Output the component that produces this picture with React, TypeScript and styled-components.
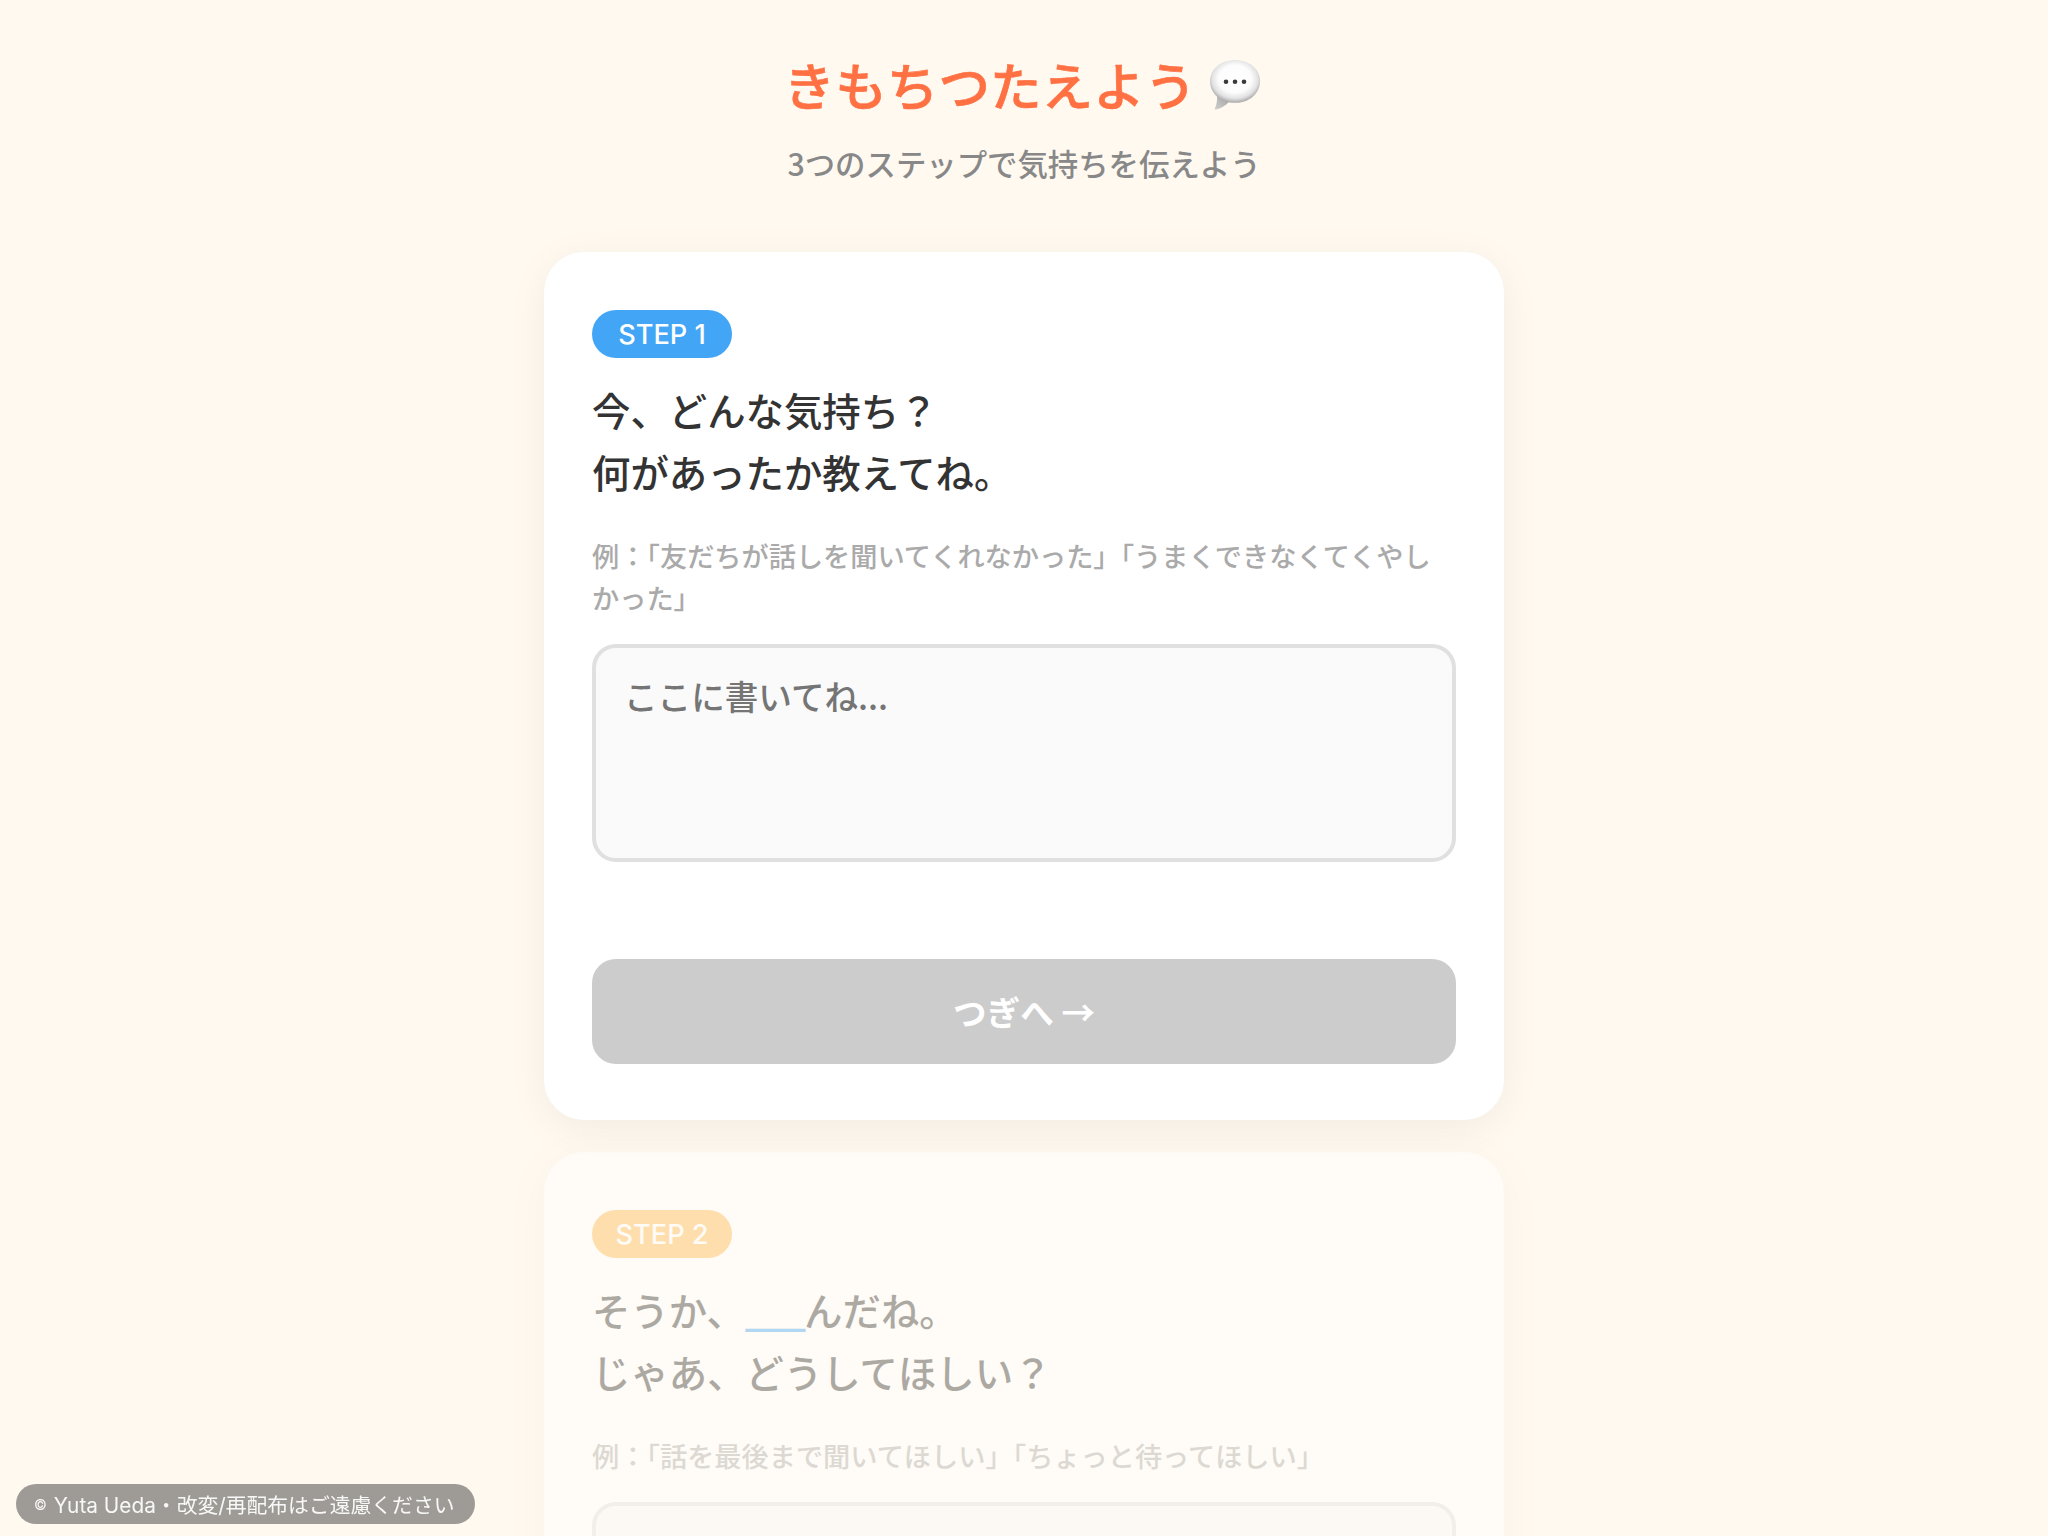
import React from 'react';
import styled, { createGlobalStyle } from 'styled-components';

const GlobalStyle = createGlobalStyle`
  * {
    box-sizing: border-box;
  }
  html,
  body {
    margin: 0;
    height: 100%;
    overflow: hidden;
    background-color: #fff9f0;
    font-family: 'Noto Sans CJK JP', 'Noto Sans', sans-serif;
  }
`;

function BubbleEmoji() {
  return (
    <StEmoji viewBox="0 0 50 50" aria-hidden="true">
      <defs>
        <radialGradient id="bubbleFill" cx="50%" cy="44%" r="56%">
          <stop offset="0%" stopColor="#ffffff" />
          <stop offset="58%" stopColor="#fcfcfc" />
          <stop offset="82%" stopColor="#e2e2e2" />
          <stop offset="100%" stopColor="#a9a9a9" />
        </radialGradient>
        <linearGradient id="tailFill" x1="0" y1="1" x2="1" y2="0">
          <stop offset="0%" stopColor="#d0d0d0" />
          <stop offset="100%" stopColor="#9c9c9c" />
        </linearGradient>
      </defs>
      <path d="M7 34L20 41C15.5 45.5 10.5 48.8 6 49.6C4.8 49.8 4.4 49 5 48C6.8 44.6 7.4 39.5 7 34Z" fill="url(#tailFill)" />
      <path
        d="M25 0C39 0 50 8.8 50 21.2C50 33.8 39 42.8 25 42.8C11 42.8 0 33.8 0 21.2C0 8.8 11 0 25 0Z"
        fill="url(#bubbleFill)"
      />
      <circle cx="16" cy="21.7" r="2.3" fill="#3a3a3a" />
      <circle cx="25" cy="21.7" r="2.3" fill="#3a3a3a" />
      <circle cx="34" cy="21.7" r="2.3" fill="#3a3a3a" />
    </StEmoji>
  );
}

export default function App() {
  return (
    <StPage>
      <GlobalStyle />
      <StHeader>
        <StTitle>
          きもちつたえよう
          <BubbleEmoji />
        </StTitle>
        <StSubtitle>3つのステップで気持ちを伝えよう</StSubtitle>
      </StHeader>

      <StSteps>
        <StCard>
          <StBadge $color="#42a5f5">STEP 1</StBadge>
          <StQuestion>
            今、どんな気持ち？
            <br />
            何があったか教えてね。
          </StQuestion>
          <StHint>例：「友だちが話しを聞いてくれなかった」「うまくできなくてくやしかった」</StHint>
          <StTextarea placeholder="ここに書いてね..." />
          <StNextButton disabled>つぎへ →</StNextButton>
        </StCard>

        <StCard $dimmed>
          <StBadge $color="#ffb74d">STEP 2</StBadge>
          <StQuestion>
            そうか、<StBlank>___</StBlank>んだね。
            <br />
            じゃあ、どうしてほしい？
          </StQuestion>
          <StHint>例：「話を最後まで聞いてほしい」「ちょっと待ってほしい」</StHint>
          <StTextarea placeholder="ここに書いてね..." disabled />
        </StCard>
      </StSteps>

      <StCredit>
        <StCopyMark>©</StCopyMark>Yuta Ueda・改変/再配布はご遠慮ください
      </StCredit>
    </StPage>
  );
}

const StPage = styled.div`
  display: flex;
  flex-direction: column;
  align-items: center;
  height: 100vh;
  padding-top: 46px;
  overflow: hidden;
`;

const StHeader = styled.header`
  display: flex;
  flex-direction: column;
  align-items: center;
  margin-bottom: 66px;
`;

const StTitle = styled.h1`
  display: flex;
  align-items: center;
  gap: 14px;
  margin: 0 4px 18px 0;
  font-size: 51.6px;
  font-weight: 500;
  line-height: 1.49;
  color: #ff7043;
  -webkit-text-stroke: 0.6px #ff7043;
`;

const StEmoji = styled.svg`
  width: 50px;
  height: 50px;
  margin-top: 2px;
  flex-shrink: 0;
`;

const StSubtitle = styled.p`
  margin: 0;
  font-size: 30.4px;
  font-weight: 500;
  line-height: 1.5;
  color: #888888;
`;

const StSteps = styled.main`
  display: flex;
  flex-direction: column;
  gap: 32px;
  width: 960px;
`;

const StCard = styled.section<{ $dimmed?: boolean }>`
  display: flex;
  flex-direction: column;
  align-items: flex-start;
  padding: 58px 48px 56px;
  background-color: #ffffff;
  border-radius: 40px;
  box-shadow: 0 8px 40px rgba(0, 0, 0, 0.06);
  opacity: ${(p) => (p.$dimmed ? 0.4 : 1)};
`;

const StBadge = styled.span<{ $color: string }>`
  display: inline-flex;
  align-items: center;
  justify-content: center;
  width: 140px;
  height: 48px;
  margin-bottom: 21px;
  border-radius: 24px;
  background-color: ${(p) => p.$color};
  font-family: Inter, 'Noto Sans CJK JP', sans-serif;
  font-size: 27.2px;
  font-weight: 500;
  color: #ffffff;
`;

const StQuestion = styled.h2`
  margin: 0 0 33px;
  font-size: 38.4px;
  font-weight: 500;
  line-height: 1.6;
  color: #333333;
`;

const StBlank = styled.span`
  font-weight: 700;
  letter-spacing: -2px;
  color: #42a5f5;
`;

const StHint = styled.p`
  margin: 0 0 25px;
  width: 100%;
  font-size: 27.2px;
  font-weight: 500;
  line-height: 1.54;
  color: #aaaaaa;
`;

const StTextarea = styled.textarea`
  display: block;
  width: 100%;
  height: 218px;
  padding: 24px 28px;
  border: 4px solid #e0e0e0;
  border-radius: 24px;
  background-color: #fafafa;
  font-family: inherit;
  font-size: 33.6px;
  font-weight: 500;
  line-height: 1.4;
  resize: none;
  outline: none;
`;

const StNextButton = styled.button`
  width: 100%;
  height: 105px;
  margin-top: 97px;
  border: none;
  border-radius: 24px;
  background-color: #cccccc;
  font-family: inherit;
  font-size: 33.6px;
  font-weight: 700;
  color: #ffffff;
`;

const StCredit = styled.div`
  position: fixed;
  left: 16px;
  bottom: 12px;
  display: flex;
  align-items: center;
  height: 40px;
  padding: 0 21px 0 18px;
  border-radius: 20px;
  background-color: rgba(0, 0, 0, 0.38);
  font-family: Inter, 'Noto Sans CJK JP', sans-serif;
  font-size: 20.8px;
  color: rgba(255, 255, 255, 0.92);
  white-space: nowrap;
`;

const StCopyMark = styled.span`
  margin-right: 7px;
  font-size: 14px;
`;
